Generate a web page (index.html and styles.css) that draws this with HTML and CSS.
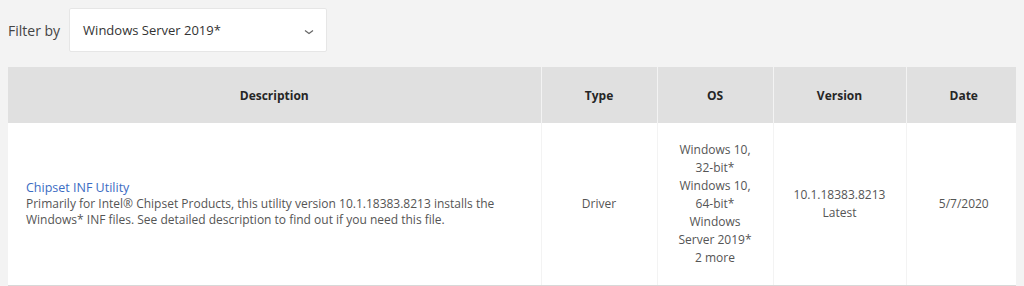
FILE: index.html
```html
<!DOCTYPE html>
<html>
<head>
  <title>Downloads</title>
  <meta name="viewport" content="width=device-width, initial-scale=1.0">
  <link rel="stylesheet" href="styles.css">
</head>
<body>
  <div class="filter">
    <span class="filter-label">Filter by</span>
    <div class="select">
      <span>Windows Server 2019*</span>
      <svg class="chevron" width="10" height="6" viewBox="0 0 10 6">
        <path d="M1 1.5 L5 4.5 L9 1.5" fill="none" stroke="#666" stroke-width="1.2"/>
      </svg>
    </div>
  </div>

  <table class="downloads">
    <colgroup>
      <col class="col-desc">
      <col class="col-type">
      <col class="col-os">
      <col class="col-ver">
      <col class="col-date">
    </colgroup>
    <thead>
      <tr>
        <th>Description</th>
        <th>Type</th>
        <th>OS</th>
        <th>Version</th>
        <th>Date</th>
      </tr>
    </thead>
    <tbody>
      <tr>
        <td class="desc">
          <a href="#">Chipset INF Utility</a><br>
          Primarily for Intel® Chipset Products, this utility version 10.1.18383.8213 installs the Windows* INF files. See detailed description to find out if you need this file.
        </td>
        <td>Driver</td>
        <td class="os">Windows 10,<br>32-bit*<br>Windows 10,<br>64-bit*<br>Windows<br>Server 2019*<br>2 more</td>
        <td>10.1.18383.8213<br>Latest</td>
        <td>5/7/2020</td>
      </tr>
    </tbody>
  </table>
</body>
</html>
```

FILE: styles.css
```css
body {
  margin: 8px 8px 0 8px;
  background-color: #f3f3f3;
  font-family: "Open Sans", "Liberation Sans", sans-serif;
  color: #555;
}

.filter {
  display: flex;
  align-items: center;
  gap: 9px;
  margin-bottom: 15px;
}

.filter-label {
  font-size: 14px;
  color: #444;
}

.select {
  box-sizing: border-box;
  width: 258px;
  height: 44px;
  padding: 0 12px 0 13px;
  display: flex;
  align-items: center;
  justify-content: space-between;
  background-color: #fff;
  border: 1px solid #e6e6e6;
  border-radius: 2px;
  font-size: 13px;
  color: #333;
}

.chevron {
  margin-top: 3px;
}

table.downloads {
  width: 1013px;
  table-layout: fixed;
  border-collapse: collapse;
  font-size: 12px;
}

.col-desc { width: 533px; }
.col-type { width: 116px; }
.col-os { width: 116px; }
.col-ver { width: 133px; }
.col-date { width: 115px; }

th {
  height: 56px;
  padding: 0;
  background-color: #e0e0e0;
  color: #262626;
  font-weight: bold;
  font-size: 12px;
  border-left: 1px solid #f3f3f3;
}

td {
  background-color: #fff;
  text-align: center;
  vertical-align: middle;
  height: 162px;
  padding: 0;
  line-height: 18px;
  border-left: 1px solid #f3f3f3;
  border-bottom: 2px solid #d8d8d8;
}

th:first-child,
td:first-child {
  border-left: none;
}

td.desc {
  text-align: left;
  padding: 0 18px;
  line-height: 16px;
}

td.desc a {
  color: #3b6cc3;
  text-decoration: none;
  font-size: 12.5px;
}
```
